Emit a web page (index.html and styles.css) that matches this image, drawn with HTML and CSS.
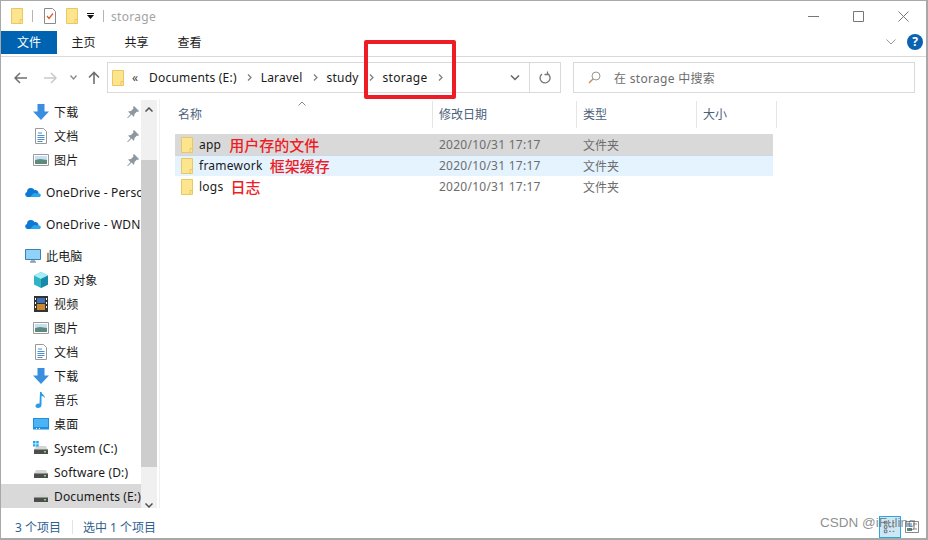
FILE: index.html
```html
<!DOCTYPE html>
<html lang="zh-CN">
<head>
    <meta charset="UTF-8">
    <title>storage</title>
    <link rel="stylesheet" href="styles.css">
</head>
<body>
    <svg class="defs" width="0" height="0">
        <symbol id="folder" viewBox="0 0 12 16">
            <path d="M.5.500h11v15H.5z" fill="#fde58f" stroke="#e9c862"/>
            <path d="M9 15.500v-4h2.500" fill="none" stroke="#e9c862"/>
        </symbol>
        <symbol id="down" viewBox="0 0 16 16">
            <path d="M4.500 0h7v7.500H16L8 16 0 7.500h4.500z" fill="#3a8ee0"/>
        </symbol>
        <symbol id="doc" viewBox="0 0 12 16">
            <path d="M.5.500h8l3 3v12H.5z" fill="#fff" stroke="#9a9a9a"/>
            <path d="M3 5h4M2.500 7.500h7M2.500 9.500h7M2.500 11.500h7M2.500 13.500h5" stroke="#4a90d0"/>
        </symbol>
        <symbol id="pic" viewBox="0 0 16 12">
            <path d="M.5.500h15v11H.5z" fill="#fff" stroke="#9a9a9a"/>
            <path d="M2 2h12v4H2z" fill="#c6dff2"/>
            <path d="M2 6l5-1 7 1v4H2z" fill="#5d8a7c"/>
        </symbol>
        <symbol id="pin" viewBox="0 0 12 12">
            <path d="M7 0l5 5-1 1-1-.5L7.500 8 7 11 4.500 8.500 1 12l-1 0 3.500-4L1 5.500 4 5l2.500-2.500L6 1z" fill="#8d979f"/>
        </symbol>
        <symbol id="cloud" viewBox="0 0 16 10">
            <path d="M2.500 10A2.500 2.500 0 0 1 2 5.100 4 4 0 0 1 9.500 3a3.300 3.300 0 0 1 4 3.500A1.800 1.800 0 0 1 14 10z" fill="#0f78d4"/>
            <path d="M5 10l4-4 3 .5 2-.1A1.800 1.800 0 0 1 14 10z" fill="#28a8ea"/>
        </symbol>
        <symbol id="drive" viewBox="0 0 14 8">
            <path d="M2 0h10l2 4H0z" fill="#d5d5d5"/>
            <path d="M0 3.500h14V8H0z" fill="#4d4d4d"/>
            <path d="M10 5h2v1.500h-2z" fill="#7ee04a"/>
        </symbol>
    </svg>

    <div class="window">
        <div class="titlebar">
            <svg class="qa-folder"><use href="#folder"/></svg>
            <span class="qa-sep"></span>
            <svg class="qa-check" viewBox="0 0 12 16">
                <path d="M.5.500h8l3 3v12H.5z" fill="#fff" stroke="#8a8a8a"/>
                <path d="M3 8l2 2.500L9 5.500" fill="none" stroke="#e2592a" stroke-width="1.300"/>
            </svg>
            <svg class="qa-folder qa-folder2"><use href="#folder"/></svg>
            <svg class="qa-drop" viewBox="0 0 7 6"><path d="M0 0h7v1H0zM0 2h7L3.500 6z" fill="#111"/></svg>
            <span class="qa-sep"></span>
            <span class="title">storage</span>
            <div class="win-btns">
                <svg viewBox="0 0 11 11"><path d="M0 5.500h11" stroke="#777"/></svg>
                <svg viewBox="0 0 11 11"><path d="M.5.500h10v10H.5z" fill="none" stroke="#777"/></svg>
                <svg viewBox="0 0 11 11"><path d="M.5.500l10 10M10.500.500l-10 10" stroke="#777"/></svg>
            </div>
        </div>

        <div class="tabs">
            <div class="tab tab-file">文件</div>
            <div class="tab">主页</div>
            <div class="tab">共享</div>
            <div class="tab">查看</div>
            <svg class="ribbon-chev" viewBox="0 0 10 6"><path d="M.5.500L5 5 9.500.500" fill="none" stroke="#999"/></svg>
            <div class="help">?</div>
        </div>

        <div class="navbar">
            <div class="nav-btns">
                <svg class="nav-back" viewBox="0 0 13 12"><path d="M6 1L1 6l5 5M1 6h12" fill="none" stroke="#6f6f6f" stroke-width="1.500"/></svg>
                <svg class="nav-fwd" viewBox="0 0 13 12"><path d="M7 1l5 5-5 5M12 6H0" fill="none" stroke="#c9c9c9" stroke-width="1.500"/></svg>
                <svg class="nav-hist" viewBox="0 0 7 5"><path d="M.5.500L3.500 4l3-3.500" fill="none" stroke="#8a8a8a" stroke-width="1.300"/></svg>
                <svg class="nav-up" viewBox="0 0 12 13"><path d="M1 6.500l5-5 5 5M6 1.500V13" fill="none" stroke="#6f6f6f" stroke-width="1.600"/></svg>
            </div>
            <div class="address">
                <svg class="addr-folder"><use href="#folder"/></svg>
                <span class="crumb-more">«</span>
                <span class="crumb">Documents (E:)</span><svg class="crumb-sep" viewBox="0 0 5 7"><path d="M1 .500L4 3.500 1 6.500" fill="none" stroke="#808080" stroke-width="1.300"/></svg>
                <span class="crumb">Laravel</span><svg class="crumb-sep" viewBox="0 0 5 7"><path d="M1 .500L4 3.500 1 6.500" fill="none" stroke="#808080" stroke-width="1.300"/></svg>
                <span class="crumb">study</span><svg class="crumb-sep" viewBox="0 0 5 7"><path d="M1 .500L4 3.500 1 6.500" fill="none" stroke="#808080" stroke-width="1.300"/></svg>
                <span class="crumb">storage</span><svg class="crumb-sep" viewBox="0 0 5 7"><path d="M1 .500L4 3.500 1 6.500" fill="none" stroke="#808080" stroke-width="1.300"/></svg>
                <svg class="addr-chev" viewBox="0 0 10 6"><path d="M1 .500L5 4.500 9 .500" fill="none" stroke="#666" stroke-width="1.500"/></svg>
                <div class="addr-refresh">
                    <svg viewBox="0 0 12 13"><path d="M8.500 2.600A5 5 0 1 1 3 3M8.500 .500v3h-3" fill="none" stroke="#777" stroke-width="1.300"/></svg>
                </div>
            </div>
            <div class="search">
                <svg viewBox="0 0 13 13"><circle cx="8" cy="5" r="4" fill="none" stroke="#999"/><path d="M5 8l-4 4" stroke="#c98a4a" stroke-width="1.200"/></svg>
                <span>在 storage 中搜索</span>
            </div>
        </div>

        <div class="content">
            <div class="sidebar">
                <div class="tree">
                    <div class="item sub"><svg class="ic16"><use href="#down"/></svg><span>下载</span><svg class="pin"><use href="#pin"/></svg></div>
                    <div class="item sub"><svg class="ic16"><use href="#doc"/></svg><span>文档</span><svg class="pin"><use href="#pin"/></svg></div>
                    <div class="item sub group-end"><svg class="ic16"><use href="#pic"/></svg><span>图片</span><svg class="pin"><use href="#pin"/></svg></div>
                    <div class="item group-end"><svg class="ic16"><use href="#cloud"/></svg><span>OneDrive - Personal</span></div>
                    <div class="item group-end"><svg class="ic16"><use href="#cloud"/></svg><span>OneDrive - WDN</span></div>
                    <div class="item">
                        <svg class="ic16" viewBox="0 0 16 16">
                            <path d="M.5 1.500h15v10H.5z" fill="#8fd3f8" stroke="#3d7fb0"/>
                            <path d="M5 14h6M7 12v2M9 12v2" stroke="#8a9aa5" stroke-width="1.500"/>
                        </svg>
                        <span>此电脑</span>
                    </div>
                    <div class="item sub">
                        <svg class="ic16" viewBox="0 0 16 16">
                            <path d="M8 0l7 3.500v9L8 16l-7-3.500v-9z" fill="#2fb4c6"/>
                            <path d="M8 0l7 3.500L8 7 1 3.500z" fill="#a5edf2"/>
                            <path d="M8 7l7-3.500v9L8 16z" fill="#178aa8"/>
                        </svg>
                        <span>3D 对象</span>
                    </div>
                    <div class="item sub">
                        <svg class="ic16" viewBox="0 0 16 16">
                            <path d="M1 0h14v16H1z" fill="#333"/>
                            <path d="M4 2h8v5H4z" fill="#3f6fb5"/>
                            <path d="M4 8h8v6H4z" fill="#c98a2e"/>
                            <path d="M2 2h1v2H2zM2 6h1v2H2zM2 10h1v2H2zM13 2h1v2h-1zM13 6h1v2h-1zM13 10h1v2h-1z" fill="#fff"/>
                        </svg>
                        <span>视频</span>
                    </div>
                    <div class="item sub"><svg class="ic16"><use href="#pic"/></svg><span>图片</span></div>
                    <div class="item sub"><svg class="ic16"><use href="#doc"/></svg><span>文档</span></div>
                    <div class="item sub"><svg class="ic16"><use href="#down"/></svg><span>下载</span></div>
                    <div class="item sub">
                        <svg class="ic16" viewBox="0 0 16 16">
                            <path d="M7 0h1.500c.3 2.500 3.500 3 3.500 6-.8-1.300-2-2-3.500-2v9c0 1.800-1.500 3-3.500 3-1.600 0-2.500-.8-2.500-2 0-1.500 1.500-2.500 3-2.500.4 0 .7 0 1 .2z" fill="#2b9be8"/>
                        </svg>
                        <span>音乐</span>
                    </div>
                    <div class="item sub">
                        <svg class="ic16" viewBox="0 0 16 16">
                            <path d="M0 2h16v11.500H0z" fill="#1c8fe0"/>
                            <path d="M1 3h14v8H1z" fill="#4db4f2"/>
                            <path d="M3 12h1v1H3zM6 12h1v1H6z" fill="#fff"/>
                        </svg>
                        <span>桌面</span>
                    </div>
                    <div class="item sub">
                        <svg class="ic16" viewBox="0 0 16 16">
                            <use href="#drive" y="6" width="14" height="8" x="1"/>
                            <path d="M0 1h2.500v2.500H0zM3.200 1h2.500v2.500H3.200zM0 4.200h2.500v2.300H0zM3.200 4.200h2.500v2.300H3.200z" fill="#1ea7f0"/>
                        </svg>
                        <span>System (C:)</span>
                    </div>
                    <div class="item sub">
                        <svg class="ic16" viewBox="0 0 16 16"><use href="#drive" y="6" width="14" height="8" x="1"/></svg>
                        <span>Software (D:)</span>
                    </div>
                    <div class="item sub active">
                        <svg class="ic16" viewBox="0 0 16 16"><use href="#drive" y="6" width="14" height="8" x="1"/></svg>
                        <span>Documents (E:)</span>
                    </div>
                </div>
                <div class="scrollbar">
                    <svg class="scroll-up" viewBox="0 0 8 5"><path d="M.5 4.500L4 1l3.500 3.500" fill="none" stroke="#505050" stroke-width="1.500"/></svg>
                    <div class="scroll-thumb"></div>
                    <svg class="scroll-down" viewBox="0 0 8 5"><path d="M.5.500L4 4 7.500.500" fill="none" stroke="#505050" stroke-width="1.500"/></svg>
                </div>
            </div>

            <div class="files">
                <div class="file-head">
                    <div class="col-head col-name">名称
                        <svg class="sort-arrow" viewBox="0 0 8 5"><path d="M.5 4.500L4 1l3.500 3.500" fill="none" stroke="#888"/></svg>
                    </div>
                    <div class="col-head col-date">修改日期</div>
                    <div class="col-head col-type">类型</div>
                    <div class="col-head col-size">大小</div>
                </div>
                <div class="file-list">
                    <div class="file-row selected">
                        <div class="file-name"><svg class="file-icon"><use href="#folder"/></svg>app<span class="note note-app">用户存的文件</span></div>
                        <div class="file-meta file-date">2020/10/31 17:17</div>
                        <div class="file-meta">文件夹</div>
                    </div>
                    <div class="file-row hover">
                        <div class="file-name"><svg class="file-icon"><use href="#folder"/></svg>framework<span class="note note-fw">框架缓存</span></div>
                        <div class="file-meta file-date">2020/10/31 17:17</div>
                        <div class="file-meta">文件夹</div>
                    </div>
                    <div class="file-row">
                        <div class="file-name"><svg class="file-icon"><use href="#folder"/></svg>logs<span class="note note-logs">日志</span></div>
                        <div class="file-meta file-date">2020/10/31 17:17</div>
                        <div class="file-meta">文件夹</div>
                    </div>
                </div>
            </div>
        </div>

        <div class="statusbar">
            <span class="status-count">3 个项目</span>
            <span class="status-sep"></span>
            <span>选中 1 个项目</span>
            <div class="view-btns">
                <div class="view-btn on">
                    <svg viewBox="0 0 16 16"><path d="M1.500 1.500h3v3h-3zM1.500 6.500h3v3h-3zM1.500 11.500h3v3h-3z" fill="none" stroke="#666"/><path d="M7 3h2M11 3h2M7 8h2M11 8h2M7 13h2M11 13h2" stroke="#666"/></svg>
                </div>
                <div class="view-btn">
                    <svg viewBox="0 0 14 12"><path d="M.5.500h13v11H.5z" fill="#fff" stroke="#888"/><path d="M2 2h5v4H2z" fill="#8fc1e0"/><path d="M2 7h5v3H2z" fill="#5d8a7c"/><path d="M8 3h4M8 8h4" stroke="#888"/></svg>
                </div>
            </div>
        </div>

        <div class="red-box"></div>
        <div class="watermark">CSDN @iFuling</div>
    </div>
</body>
</html>
```

FILE: styles.css
```css
* {
    margin: 0;
    padding: 0;
    box-sizing: border-box;
}

body {
    width: 928px;
    height: 540px;
    overflow: hidden;
    background: #fff;
    font-family: "Noto Sans", "Noto Sans CJK SC", sans-serif;
    font-size: 12px;
    color: #1a1a1a;
}

.defs {
    position: absolute;
}

.window {
    position: relative;
    width: 928px;
    height: 540px;
    display: flex;
    flex-direction: column;
    border: 1px solid #a8a8a8;
    border-width: 1px 2px 2px 1px;
}

/* title bar */
.titlebar {
    height: 30px;
    display: flex;
    align-items: center;
    padding-left: 10px;
}

.qa-folder {
    width: 12px;
    height: 16px;
}

.qa-folder2 {
    margin-left: 10px;
}

.qa-sep {
    width: 1px;
    height: 12px;
    background: #b5b5b5;
    margin-left: 9px;
}

.qa-check {
    width: 12px;
    height: 16px;
    margin-left: 11px;
}

.qa-drop {
    width: 7px;
    height: 6px;
    margin-left: 9px;
}

.title {
    margin-left: 7px;
    font-size: 12px;
    color: #a3a3a3;
    letter-spacing: 0.3px;
}

.win-btns {
    margin-left: auto;
    display: flex;
    gap: 34px;
    padding-right: 17px;
}

.win-btns svg {
    width: 11px;
    height: 11px;
}

/* ribbon tabs */
.tabs {
    height: 26px;
    display: flex;
    align-items: center;
    border-bottom: 1px solid #dadada;
    padding-bottom: 3px;
}

.tab {
    width: 53px;
    text-align: center;
    line-height: 23px;
}

.tab-file {
    width: 56px;
    background: #0063b1;
    color: #fff;
}

.ribbon-chev {
    width: 10px;
    height: 6px;
    margin-left: auto;
    margin-right: 11px;
}

.help {
    width: 16px;
    height: 16px;
    margin-right: 3px;
    border-radius: 50%;
    background: #0a62b0;
    color: #fff;
    font-weight: 700;
    font-size: 12px;
    line-height: 16px;
    text-align: center;
}

/* address row */
.navbar {
    height: 42px;
    display: flex;
    align-items: center;
    padding-top: 5px;
    padding-bottom: 6px;
}

.nav-btns {
    width: 106px;
    display: flex;
    align-items: center;
}

.nav-back {
    width: 13px;
    height: 12px;
    margin-left: 13px;
}

.nav-fwd {
    width: 13px;
    height: 12px;
    margin-left: 17px;
}

.nav-hist {
    width: 7px;
    height: 5px;
    margin-left: 13px;
}

.nav-up {
    width: 12px;
    height: 13px;
    margin-left: 11px;
}

.address {
    width: 454px;
    height: 31px;
    display: flex;
    align-items: center;
    border: 1px solid #d9d9d9;
}

.addr-folder {
    width: 12px;
    height: 16px;
    margin-left: 4px;
}

.crumb-more {
    margin-left: 8px;
    width: 17px;
    color: #444;
}

.crumb {
    letter-spacing: 0.2px;
}

.crumb-sep {
    width: 5px;
    height: 7px;
    margin: 0 9px 0 10px;
}

.crumb:last-of-type {
    letter-spacing: 0.3px;
}

.addr-chev {
    width: 10px;
    height: 6px;
    margin-left: auto;
    margin-right: 9px;
}

.addr-refresh {
    width: 31px;
    height: 29px;
    border-left: 1px solid #d9d9d9;
    display: flex;
    align-items: center;
    justify-content: center;
}

.addr-refresh svg {
    width: 12px;
    height: 13px;
}

.search {
    width: 342px;
    height: 31px;
    margin-left: 12px;
    display: flex;
    align-items: center;
    border: 1px solid #d9d9d9;
    color: #6d6d6d;
    letter-spacing: 0.3px;
}

.search svg {
    width: 13px;
    height: 13px;
    margin-left: 14px;
    margin-right: 13px;
}

/* navigation pane */
.content {
    flex: 1;
    display: flex;
    min-height: 0;
}

.sidebar {
    width: 159px;
    display: flex;
    border-right: 1px solid #f0f0f0;
    padding-right: 2px;
    padding-top: 1px;
}

.tree {
    width: 140px;
    overflow: hidden;
}

.item {
    position: relative;
    height: 24px;
    display: flex;
    align-items: center;
    white-space: nowrap;
    padding-left: 24px;
    letter-spacing: 0.15px;
}

.item.sub {
    padding-left: 32px;
}

.item.group-end {
    margin-bottom: 8px;
}

.item.active {
    background: #d9d9d9;
}

.ic16 {
    width: 16px;
    height: 16px;
    margin-right: 5px;
    flex-shrink: 0;
}

.pin {
    position: absolute;
    left: 126px;
    top: 6px;
    width: 12px;
    height: 12px;
}

.scrollbar {
    width: 16px;
    height: 408px;
    background: #f0f0f0;
    display: flex;
    flex-direction: column;
    align-items: center;
}

.scroll-up,
.scroll-down {
    width: 8px;
    height: 5px;
}

.scroll-up {
    margin-top: 7px;
    margin-bottom: 48px;
}

.scroll-down {
    margin-top: 36px;
}

.scroll-thumb {
    width: 16px;
    height: 307px;
    background: #cdcdcd;
}

/* file list */
.files {
    flex: 1;
    padding-left: 12px;
    padding-top: 2px;
}

.file-head {
    height: 27px;
    display: flex;
}

.col-head {
    position: relative;
    padding-left: 6px;
    line-height: 28px;
    color: #4c607a;
    border-right: 1px solid #e5e5e5;
}

.col-name {
    width: 261px;
}

.col-date {
    width: 144px;
}

.col-type {
    width: 120px;
}

.col-size {
    width: 80px;
}

.sort-arrow {
    position: absolute;
    left: 126px;
    top: 0;
    width: 8px;
    height: 5px;
}

.file-list {
    margin-top: 6px;
    margin-left: 3px;
    width: 598px;
}

.file-row {
    height: 21px;
    display: grid;
    grid-template-columns: 258px 144px 1fr;
    align-items: center;
}

.file-row.selected {
    background: #d9d9d9;
}

.file-row.hover {
    background: #e5f3ff;
    box-shadow: inset 0 1px 0 #c9d9e8;
}

.file-name {
    display: flex;
    align-items: center;
    padding-left: 6px;
    letter-spacing: 0.25px;
    white-space: nowrap;
}

.file-icon {
    width: 12px;
    height: 16px;
    margin-right: 6px;
}

.file-meta {
    padding-left: 6px;
    color: #6d6d6d;
}

.file-date {
    letter-spacing: 0.25px;
}

.note {
    color: #ee1c25;
    font-size: 15px;
    font-weight: 500;
    letter-spacing: 0;
}

.note-app {
    margin-left: 8px;
}

.note-fw {
    margin-left: 7px;
}

.note-logs {
    margin-left: 7px;
}

/* status bar */
.statusbar {
    height: 30px;
    display: flex;
    align-items: center;
    padding-left: 14px;
    color: #2f5f8f;
    padding-top: 8px;
}

.status-count {
    width: 57px;
}

.status-sep {
    width: 1px;
    height: 14px;
    background: #e3e3e3;
    margin-right: 10px;
}

.view-btns {
    margin-left: auto;
    margin-right: 3px;
    display: flex;
    align-items: center;
    align-self: flex-end;
}

.view-btn {
    width: 22px;
    height: 22px;
    display: flex;
    align-items: center;
    justify-content: center;
}

.view-btn svg {
    width: 14px;
    height: 14px;
}

.view-btn.on {
    background: #cce8f7;
    border: 1px solid #2fa4e0;
}

/* annotations pasted over the screenshot */
.red-box {
    position: absolute;
    left: 363px;
    top: 39px;
    width: 92px;
    height: 59px;
    border: 4px solid #ee1c25;
    border-radius: 2px;
}

.watermark {
    position: absolute;
    left: 819px;
    top: 514px;
    font-family: "Liberation Sans", sans-serif;
    font-size: 13.5px;
    color: rgba(90, 90, 90, 0.7);
    white-space: nowrap;
}
```
